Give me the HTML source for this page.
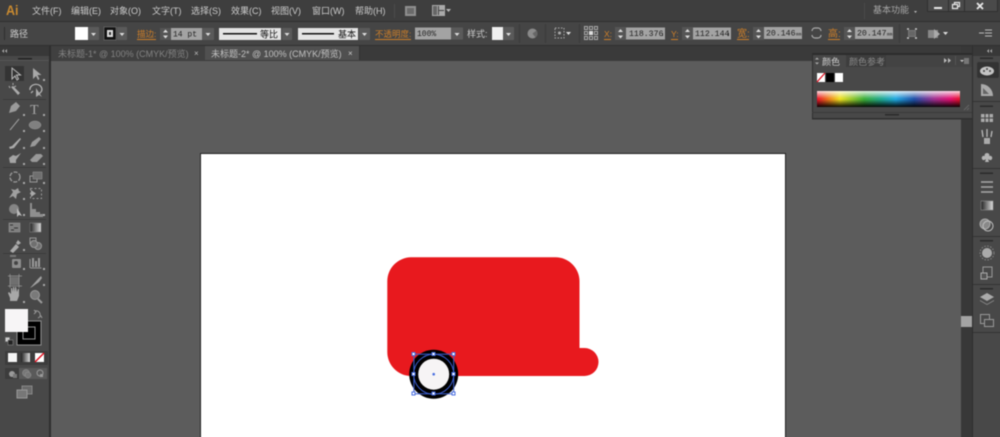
<!DOCTYPE html>
<html><head><meta charset="utf-8"><style>
html,body{margin:0;padding:0;background:#5c5c5c;width:1000px;height:437px;overflow:hidden;position:relative}
svg{display:block;position:absolute;left:-4px;top:-4px;filter:blur(.4px)}
text{font-family:"Liberation Sans","Noto Sans CJK SC",sans-serif;font-size:9px;fill:#cbcbcb}
.m{font-family:"Liberation Mono","Noto Sans CJK SC",monospace;font-size:8px;fill:#222}
.o{fill:#cf7f28;font-size:8.5px}
.s{fill:none;stroke:#b8b8b8;stroke-width:1.2}
.d{fill:#aaa}
</style></head><body>
<svg width="1008" height="445" viewBox="-4 -4 1008 445" xmlns="http://www.w3.org/2000/svg">
<defs>
<linearGradient id="h" x1="0" x2="1" y1="0" y2="0">
<stop offset="0" stop-color="#e8102a"/><stop offset=".08" stop-color="#ee7a1a"/><stop offset=".16" stop-color="#efe020"/><stop offset=".33" stop-color="#3cae3a"/><stop offset=".45" stop-color="#20a890"/><stop offset=".55" stop-color="#20a8e0"/><stop offset=".68" stop-color="#2050a8"/><stop offset=".82" stop-color="#a03090"/><stop offset=".93" stop-color="#e01070"/><stop offset="1" stop-color="#e8102a"/>
</linearGradient>
<linearGradient id="v" x1="0" x2="0" y1="0" y2="1">
<stop offset="0" stop-color="#fff" stop-opacity=".85"/><stop offset=".48" stop-color="#fff" stop-opacity="0"/><stop offset=".52" stop-color="#000" stop-opacity="0"/><stop offset="1" stop-color="#000" stop-opacity=".95"/>
</linearGradient>
<linearGradient id="g" x1="0" x2="1" y1="0" y2="0"><stop offset="0" stop-color="#222"/><stop offset="1" stop-color="#ddd"/></linearGradient>
</defs>

<!-- canvas -->
<rect x="-4" y="-4" width="1008" height="445" fill="#5c5c5c"/>
<rect x="200.500" y="153.500" width="585" height="300" fill="#fff" stroke="#222"/>

<!-- art -->
<path d="M411 257.300H555.500A24 24 0 0 1 579.500 281.300V348H584.500A14 14 0 0 1 584.500 376H411A24 24 0 0 1 387.300 352V281.300A24 24 0 0 1 411 257.300Z" fill="#e8191e"/>
<circle cx="433.700" cy="374.200" r="24.500" fill="#000"/>
<circle cx="433.700" cy="374.200" r="15.500" fill="#f6f4f5"/>
<rect x="413.900" y="354.200" width="39.800" height="39.600" fill="none" stroke="#3d5fd0" stroke-width="1"/>
<circle cx="433.700" cy="374.200" r="20" fill="none" stroke="#3d5fd0" stroke-width="1"/>
<g fill="#fff" stroke="#4a6fe0" stroke-width="1">
<rect x="412" y="352.500" width="3" height="3"/><rect x="432" y="352.500" width="3" height="3"/><rect x="452" y="352.500" width="3" height="3"/>
<rect x="412" y="372.500" width="3" height="3"/><rect x="452" y="372.500" width="3" height="3"/>
<rect x="412" y="392" width="3" height="3"/><rect x="432" y="392" width="3" height="3"/><rect x="452" y="392" width="3" height="3"/>
</g>
<circle cx="433.700" cy="374.200" r="1.300" fill="#4a6fe0"/>

<!-- menu bar -->
<rect x="-4" y="-4" width="1008" height="26" fill="#3e3e3e"/>
<rect x="-4" y="21" width="1008" height="1" fill="#303030"/>
<text x="6" y="15" textLength="12.500" lengthAdjust="spacingAndGlyphs" style="font-size:14px;font-weight:bold;fill:#c98a30">Ai</text>
<text x="32" y="14">文件(F)</text><text x="71" y="14">编辑(E)</text><text x="110" y="14">对象(O)</text><text x="152" y="14">文字(T)</text><text x="191" y="14">选择(S)</text><text x="231" y="14">效果(C)</text><text x="271" y="14">视图(V)</text><text x="312" y="14">窗口(W)</text><text x="355" y="14">帮助(H)</text>
<rect x="394" y="4" width="1" height="14" fill="#4c4c4c"/>
<rect x="405" y="6" width="11" height="10" fill="#8f8f8f"/><rect x="407" y="8" width="7" height="6" fill="#6a6a6a"/>
<rect x="432" y="5" width="13" height="11" fill="#aaa"/><rect x="438" y="6" width="1" height="9" fill="#444"/><rect x="439" y="10" width="5" height="1" fill="#444"/><rect x="433" y="6" width="4" height="9" fill="#666"/>
<path d="M446 9h5l-2.500 3z" fill="#bbb"/>
<rect x="864" y="3" width="1" height="16" fill="#4a4a4a"/>
<text x="873" y="13" style="fill:#a8a8a8">基本功能</text>
<path d="M914 11h3l-1.500 2z" fill="#bbb"/>
<!-- window controls -->
<path d="M927 -4H998V11Q998 12 996 12H929Q927 12 927 11Z" fill="#2f2f2f"/>
<rect x="928" y="-4" width="20" height="15" fill="#4a4a4a"/><rect x="949" y="-4" width="15" height="15" fill="#4a4a4a"/><rect x="965" y="-4" width="32" height="15" fill="#4a4a4a"/>
<rect x="934" y="7" width="8" height="2" fill="#e8e8e8"/>
<path d="M952.500 4.500h5v4h-5zM954.500 4.500v-2h5v4h-2" fill="none" stroke="#e8e8e8" stroke-width="1.200"/>
<path d="M977 3l6 6M983 3l-6 6" stroke="#e8e8e8" stroke-width="1.800" fill="none"/>

<!-- control bar -->
<rect x="-4" y="22" width="1008" height="24" fill="#454545"/>
<rect x="-4" y="45" width="1008" height="1" fill="#303030"/>
<rect x="4" y="27" width="1" height="13" fill="#2f2f2f"/>
<text x="10" y="37">路径</text>
<rect x="75" y="27" width="13" height="13" fill="#fff"/>
<rect x="88" y="27" width="11" height="13" fill="#5a5a5a"/><path d="M91 33h5l-2.500 3z" fill="#ddd"/>
<rect x="104" y="27" width="12" height="13" fill="#111" stroke="#888" stroke-width=".5"/><rect x="107" y="30" width="6" height="7" fill="#ddd"/><rect x="109" y="32" width="2" height="3" fill="#333"/>
<rect x="117" y="27" width="10" height="13" fill="#5a5a5a"/><path d="M119.500 33h5l-2.500 3z" fill="#ddd"/>
<text x="137" y="37" class="o">描边:</text><rect x="137" y="39" width="19" height="1" fill="#cf7f28"/>
<rect x="160" y="28" width="11" height="12" fill="#555"/><path d="M163 32.500h5l-2.500-3zM163 35.500h5l-2.500 3z" fill="#ddd"/>
<rect x="171" y="28" width="31" height="12" fill="#a3a3a3"/><text x="173" y="36.500" class="m">14 pt</text>
<rect x="202" y="28" width="12" height="12" fill="#5a5a5a"/><path d="M205.500 33h5l-2.500 3z" fill="#ddd"/>
<rect x="219" y="28" width="62" height="12" fill="#e4e4e4"/><rect x="223" y="33" width="34" height="1.500" fill="#111"/><text x="260" y="37.500" style="fill:#111">等比</text>
<rect x="282" y="28" width="10" height="12" fill="#5a5a5a"/><path d="M284.500 33h5l-2.500 3z" fill="#ddd"/>
<rect x="298" y="28" width="60" height="12" fill="#e4e4e4"/><rect x="302" y="33" width="32" height="1.500" fill="#111"/><text x="338" y="37.500" style="fill:#111">基本</text>
<rect x="359" y="28" width="11" height="12" fill="#5a5a5a"/><path d="M362 33h5l-2.500 3z" fill="#ddd"/>
<text x="375" y="37" class="o">不透明度:</text><rect x="375" y="39" width="36" height="1" fill="#cf7f28"/>
<rect x="415" y="27.500" width="36" height="12" fill="#a3a3a3"/><text x="417" y="36" class="m">100%</text>
<rect x="451" y="27.500" width="12" height="12" fill="#5a5a5a"/><path d="M454.500 33h5l-2.500 3z" fill="#ddd"/>
<text x="467" y="37">样式:</text>
<rect x="492" y="27" width="11" height="13" fill="#f0f0f0"/><rect x="503" y="27" width="11" height="13" fill="#5a5a5a"/><path d="M506 33h5l-2.500 3z" fill="#ddd"/>
<rect x="519" y="24" width="1" height="19" fill="#3a3a3a"/>
<circle cx="532.500" cy="33.500" r="5" fill="#8a8a8a"/><path d="M532.500 33.500l4-3a5 5 0 0 1-1 7z" fill="#666"/>
<rect x="545" y="24" width="1" height="19" fill="#3a3a3a"/>
<rect x="555" y="28" width="9" height="10" fill="none" stroke="#aaa" stroke-dasharray="1.500 1.500"/><circle cx="559.500" cy="33" r="1.500" fill="#aaa"/><path d="M566 32h5l-2.500 3z" fill="#ddd"/>
<rect x="579" y="24" width="1" height="19" fill="#3a3a3a"/>
<g fill="none" stroke="#aaa"><rect x="584.500" y="26.500" width="3" height="3"/><rect x="589.500" y="26.500" width="3" height="3"/><rect x="594.500" y="26.500" width="3" height="3"/><rect x="584.500" y="31.500" width="3" height="3"/><rect x="594.500" y="31.500" width="3" height="3"/><rect x="584.500" y="36.500" width="3" height="3"/><rect x="589.500" y="36.500" width="3" height="3"/><rect x="594.500" y="36.500" width="3" height="3"/></g><rect x="589" y="31" width="4" height="4" fill="#ddd"/>

<text x="604" y="37" class="o">X:</text><rect x="604" y="39" width="7" height="1" fill="#cf7f28"/>
<rect x="615" y="27" width="11" height="13" fill="#555"/><path d="M618 32h5l-2.500-3zM618 35.500h5l-2.500 3z" fill="#ddd"/>
<rect x="626" y="27.500" width="39" height="12" fill="#a3a3a3"/><text x="629" y="36" class="m" style="font-size:8.200px">118.376</text><rect x="662" y="33" width="1" height="3" fill="#333"/>
<text x="671" y="37" class="o">Y:</text><rect x="671" y="39" width="7" height="1" fill="#cf7f28"/>
<rect x="682" y="27" width="11" height="13" fill="#555"/><path d="M685 32h5l-2.500-3zM685 35.500h5l-2.500 3z" fill="#ddd"/>
<rect x="693" y="27.500" width="38" height="12" fill="#a3a3a3"/><text x="695" y="36" class="m" style="font-size:8.200px">112.144</text><rect x="728" y="33" width="1" height="3" fill="#333"/>
<text x="737" y="37" class="o" style="font-size:10px">宽:</text><rect x="737" y="39" width="12" height="1" fill="#cf7f28"/>
<rect x="753" y="27" width="11" height="13" fill="#555"/><path d="M756 32h5l-2.500-3zM756 35.500h5l-2.500 3z" fill="#ddd"/>
<rect x="764" y="27" width="38" height="12" fill="#a3a3a3"/><text x="766" y="35.500" class="m" style="font-size:8.200px">20.146</text><text x="796" y="35.500" class="m" style="font-size:4.500px">mm</text>
<path d="M812 31a3 3 0 0 1 3-3h3a3 3 0 0 1 3 3M812 35a3 3 0 0 0 3 3h3a3 3 0 0 0 3-3" fill="none" stroke="#aaa" stroke-width="1.200"/>
<text x="828" y="37" class="o" style="font-size:10px">高:</text><rect x="828" y="39" width="12" height="1" fill="#cf7f28"/>
<rect x="844" y="27" width="11" height="13" fill="#555"/><path d="M847 32h5l-2.500-3zM847 35.500h5l-2.500 3z" fill="#ddd"/>
<rect x="855" y="27" width="38" height="12" fill="#a3a3a3"/><text x="857" y="35.500" class="m" style="font-size:8.200px">20.147</text><text x="887" y="35.500" class="m" style="font-size:4.500px">mm</text>
<rect x="899" y="24" width="1" height="19" fill="#3a3a3a"/>
<rect x="908.500" y="30.500" width="7" height="6" fill="#666" stroke="#999" stroke-width=".5"/><path d="M907 29h2M915 29h2M907 38h2M915 38h2" stroke="#ccc" stroke-width="1.500"/>
<rect x="928" y="30" width="10" height="8" fill="#888"/><path d="M934 29l6 5-6 5z" fill="#aaa"/><path d="M943 32h5l-2.500 3z" fill="#ddd"/>
<path d="M979 33h5M985 30h7M985 33h7M985 36h7" stroke="#bbb" fill="none"/>

<!-- tab bar -->
<rect x="-4" y="46" width="1008" height="14" fill="#3a3a3a"/>
<rect x="51" y="46" width="154" height="14" fill="#404040"/>
<text x="58" y="57" style="fill:#828282">未标题-1* @ 100% (CMYK/预览)</text>
<text x="194" y="56" style="font-size:8px;fill:#bbb">×</text>
<rect x="205" y="46" width="154" height="14" fill="#505050"/>
<text x="211" y="57" style="fill:#c0c0c0">未标题-2* @ 100% (CMYK/预览)</text>
<text x="348" y="56" style="font-size:8px;fill:#ccc">×</text>
<rect x="359" y="46" width="1" height="14" fill="#333"/>
<rect x="51" y="60" width="910" height="1" fill="#3c3c3c"/>

<!-- left toolbar -->
<rect x="-4" y="46" width="53" height="395" fill="#484848"/>
<rect x="-4" y="46" width="53" height="10" fill="#383838"/>
<rect x="49" y="46" width="2" height="395" fill="#2e2e2e"/>
<path d="M4 49l-2 2 2 2zM7 49l-2 2 2 2z" fill="#aaa"/>
<rect x="18" y="58" width="14" height="1.500" fill="#222"/>
<rect x="-4" y="60" width="53" height="1" fill="#555"/>
<rect x="5" y="66" width="19" height="15" fill="#343434"/>
<path d="M12 68v11l3-3 2 4 1.500-1-2-4h4z" fill="none" stroke="#bbb"/>
<path d="M33 68v11l3-3 2 4 1.500-1-2-4h4z" fill="#a8a8a8"/><rect class="d" x="43" y="79" width="2" height="2"/>
<path d="M11 87l2-1 7 7-2 2z" fill="#aaa"/><path d="M9 86l1 2M13 83v2M16 86l-2 1" stroke="#aaa" fill="none"/>
<path d="M30 90a6 5 0 1 1 8 4M31 93l2-2" class="s"/><path d="M36 88v9l3-2 3 2z" fill="#aaa"/>
<rect x="3" y="99" width="43" height="1" fill="#3b3b3b"/>
<path d="M9 113l2-7 5-4 4 4-4 5z" fill="#9a9a9a"/><rect class="d" x="23" y="114" width="2" height="2"/>
<text x="30" y="114" style="font-family:'Liberation Serif',serif;font-size:14px;fill:#a8a8a8">T</text><rect class="d" x="43" y="114" width="2" height="2"/>
<path d="M10 130l9-11" stroke="#a0a0a0" fill="none"/><rect class="d" x="23" y="130" width="2" height="2"/>
<ellipse cx="35" cy="125" rx="6" ry="4" fill="#808080" stroke="#999" stroke-width=".5"/><rect class="d" x="43" y="130" width="2" height="2"/>
<path d="M9 147l3-1 8-8 1 1-7 9-4 1z" fill="#aaa"/><rect class="d" x="23" y="147" width="2" height="2"/>
<path d="M30 147l2-5 7-5 2 2-6 7z" fill="#999"/><rect class="d" x="43" y="147" width="2" height="2"/>
<path d="M9 158l4-3 3 1 5-3-5 7v3H10z" fill="#a4a4a4"/><rect class="d" x="23" y="163" width="2" height="2"/>
<path d="M30 160l6-6h5l2 2-6 6h-5z" fill="#999"/><rect class="d" x="43" y="163" width="2" height="2"/>
<rect x="3" y="167" width="43" height="1" fill="#3b3b3b"/>
<circle cx="15" cy="177" r="5" fill="none" stroke="#999" stroke-width="1.300" stroke-dasharray="4 1.500"/><rect class="d" x="23" y="182" width="2" height="2"/>
<rect x="30" y="176" width="7" height="6" fill="none" stroke="#999"/><rect x="33" y="172" width="9" height="7" fill="#6f6f6f" stroke="#999" stroke-width=".5"/><rect class="d" x="43" y="182" width="2" height="2"/>
<path d="M9 198l4-6-2-3 4 1 3-2 1 3 2 1-4 2-1 5-3-3z" fill="#a0a0a0"/><rect class="d" x="23" y="198" width="2" height="2"/>
<rect x="30.500" y="188.500" width="11" height="10" fill="none" stroke="#999" stroke-dasharray="2 2"/><path d="M31 190l5 3.500-5 3.500z" fill="#aaa"/>
<circle cx="14" cy="209" r="5" fill="#858585"/><path d="M17 208v9l2-2 3 1z" fill="#bbb"/><rect class="d" x="23" y="214" width="2" height="2"/>
<path d="M30 203h2v14h-2zM32 209h4v8h-4zM36 212h4v5h-4zM40 214h3v3h-3z" fill="#8e8e8e"/><rect class="d" x="43" y="214" width="2" height="2"/>
<rect x="3" y="219" width="43" height="1" fill="#3b3b3b"/>
<rect x="9" y="223" width="11" height="9" fill="#808080" stroke="#999" stroke-width=".5"/><path d="M10 225h3M14 228h4M11 230h3" stroke="#333"/>
<rect x="30" y="223" width="11" height="9" fill="url(#g)" stroke="#888" stroke-width=".5"/>
<path d="M10 251l6-7 3 3-6 6zM16 243l2-3 3 3-3 2z" fill="#aaa"/><rect class="d" x="23" y="249" width="2" height="2"/>
<rect x="30" y="238" width="6" height="6" fill="none" stroke="#999"/><circle cx="38" cy="246" r="3.500" fill="#6f6f6f" stroke="#999"/><circle cx="34" cy="244" r="3.500" fill="#6f6f6f" stroke="#999"/>
<rect x="3" y="253" width="43" height="1" fill="#3b3b3b"/>
<rect x="12" y="259" width="9" height="9" rx="1" fill="#8e8e8e"/><circle cx="16" cy="263" r="2" fill="#444"/><path d="M10 256h6" stroke="#777" stroke-width="2"/><rect class="d" x="23" y="268" width="2" height="2"/>
<path d="M30 268v-9M30.500 268h11" stroke="#999" fill="none"/><path d="M32 258h2v9h-2zM35 261h2v6h-2zM38 258h2v9h-2z" fill="#999"/><rect class="d" x="43" y="268" width="2" height="2"/>
<rect x="10" y="277" width="9" height="8" fill="#6f6f6f"/><path d="M8 276h14M8 286h14M10 274v14M19 274v14" stroke="#999" fill="none" stroke-width=".7"/>
<path d="M30 288l8-9 3-3 1 2-3 4-7 5z" fill="#a0a0a0"/><rect class="d" x="43" y="284" width="2" height="2"/>
<path d="M10 298l-2-5 1-1 2 2v-6h1l1 4v-5h1l1 5v-5h1l1 5 1-3h1v7l-2 5h-7z" fill="#a8a8a8"/><rect class="d" x="23" y="301" width="2" height="2"/>
<circle cx="35" cy="295" r="4.500" fill="#7a7a7a" stroke="#999"/><path d="M38 299l4 4" stroke="#999" stroke-width="2"/>

<!-- fill stroke -->
<rect x="17" y="321" width="24" height="24" fill="#000" stroke="#909090"/>
<rect x="23" y="327" width="12" height="12" fill="none" stroke="#909090"/>
<rect x="5" y="309" width="23" height="23" fill="#f7f5f6"/>
<path d="M35 311a4 4 0 0 1 5 5M34 310l2 2-2 2M38 318l3-2 1 2" fill="none" stroke="#999"/>
<rect x="5" y="337" width="5" height="5" fill="#ccc" stroke="#555"/><rect x="8" y="340" width="5" height="5" fill="#222" stroke="#888" stroke-width=".6"/>
<rect x="5" y="351" width="43" height="14" fill="#3c3c3c"/>
<rect x="8" y="353" width="9" height="9" fill="#f5f5f5"/>
<rect x="21" y="353" width="9" height="9" fill="url(#g)"/>
<rect x="35" y="353" width="9" height="9" fill="#fff"/><path d="M35 362l9-9" stroke="#e01020" stroke-width="1.500"/>
<rect x="5" y="368" width="42" height="11" fill="#5a5a5a"/><rect x="5" y="368" width="14" height="11" fill="#3c3c3c"/>
<circle cx="12" cy="374" r="3" fill="#999"/><rect x="13" y="374" width="4" height="4" fill="#777"/>
<circle cx="26" cy="373" r="3.500" fill="#777" stroke="#999" stroke-width=".5"/><circle cx="28" cy="375" r="3" fill="#777" stroke="#999" stroke-width=".5"/>
<circle cx="40" cy="373" r="3" fill="none" stroke="#999"/><rect x="40" y="374" width="3" height="3" fill="#999"/>
<rect x="22" y="386" width="10" height="8" fill="#6a6a6a" stroke="#888"/><rect x="17" y="390" width="10" height="8" fill="#777" stroke="#999"/>

<!-- scroll -->
<rect x="961" y="46" width="11" height="395" fill="#383838"/>
<rect x="961" y="316" width="11" height="11" fill="#a3a3a3"/>

<!-- color panel -->
<rect x="972" y="46" width="32" height="10" fill="#383838"/>
<rect x="972" y="46" width="1" height="395" fill="#2e2e2e"/>
<path d="M989 49l-2 2 2 2zM992 49l-2 2 2 2z" fill="#aaa"/>
<rect x="812" y="54" width="160" height="65" fill="#484848"/>
<rect x="812" y="53" width="160" height="2" fill="#2c2c2c"/>
<rect x="812" y="118" width="160" height="1.500" fill="#303030"/>
<rect x="812" y="54" width="1" height="65" fill="#2f2f2f"/>
<rect x="813" y="55" width="159" height="12" fill="#434343"/>
<rect x="813" y="55" width="33" height="12" fill="#484848"/>
<rect x="846" y="55" width="40" height="12" fill="#3d3d3d"/>
<path d="M815 59.500l2-2 2 2zM815 62.500l2 2 2-2z" fill="#aaa"/>
<text x="822" y="65" style="fill:#cfcfcf">颜色</text>
<text x="849" y="65" style="fill:#8a8a8a">颜色参考</text>
<path d="M944 58v5l3-2.500zM948 58v5l3-2.500z" fill="#bbb"/>
<rect x="955" y="56" width="1" height="9" fill="#555"/>
<path d="M960 60h4l-2 2z" fill="#ccc"/><rect x="964" y="58" width="5" height="6" fill="#777"/>
<rect x="817" y="73" width="8" height="9" fill="#fff"/><path d="M817 82l8-9" stroke="#e01020" stroke-width="1.300"/>
<rect x="826" y="73" width="8" height="9" fill="#000"/>
<rect x="835" y="73" width="8" height="9" fill="#fff"/>
<rect x="817" y="91" width="143" height="16" fill="url(#h)"/>
<rect x="817" y="91" width="143" height="16" fill="url(#v)"/>
<path d="M964 110l5-5M967 110l2-2" stroke="#666" fill="none"/>
<rect x="812" y="112" width="160" height="1" fill="#3a3a3a"/>
<rect x="885" y="114" width="14" height="1.500" fill="#2a2a2a"/>

<!-- right dock -->
<rect x="973" y="56" width="31" height="385" fill="#484848"/>
<rect x="980" y="57.500" width="13" height="1.500" fill="#2a2a2a"/>
<rect x="977" y="62" width="22" height="16" rx="2" fill="#333"/>
<ellipse cx="987" cy="71" rx="7" ry="4.500" fill="#c4c4c4"/><circle cx="984" cy="71" r="1" fill="#444"/><circle cx="987" cy="69" r="1" fill="#444"/><circle cx="990" cy="71" r="1" fill="#444"/>
<path d="M981 84v12h12a12 12 0 0 0-12-12z" fill="#aaa"/><path d="M983 88v6h6z" fill="#666"/>
<rect x="973" y="101" width="31" height="1" fill="#333"/>
<rect x="980" y="105.500" width="13" height="1.500" fill="#2a2a2a"/>
<rect x="981" y="114" width="12" height="8" fill="#aaa"/><path d="M985 114v8M989 114v8M981 118h12" stroke="#444"/>
<path d="M984 138h6v6h-6z" fill="#aaa"/><path d="M983 137l-1-7M987 137v-8M991 137l1-6" stroke="#bbb" stroke-width="1.300"/>
<path d="M987 153c-2 0-3 2-2 3-2-1-4 1-3 3s3 1 4 0l-1 3h4l-1-3c1 1 3 2 4 0s-1-4-3-3c1-1 0-3-2-3z" fill="#b4b4b4"/>
<rect x="973" y="168" width="31" height="1" fill="#333"/>
<rect x="980" y="172.500" width="13" height="1.500" fill="#2a2a2a"/>
<path d="M981 182h12M981 187h12M981 192h12" stroke="#a8a8a8" stroke-width="1.500"/>
<rect x="981" y="201" width="12" height="9" fill="url(#g)" stroke="#999" stroke-width=".5"/>
<circle cx="985" cy="224" r="5" fill="#888" stroke="#aaa"/><circle cx="988" cy="226" r="5" fill="none" stroke="#bbb"/>
<rect x="973" y="236" width="31" height="1" fill="#333"/>
<rect x="980" y="240" width="13" height="1.500" fill="#2a2a2a"/>
<circle cx="987" cy="253" r="5" fill="#aaa"/><circle cx="987" cy="253" r="7" fill="none" stroke="#888" stroke-dasharray="1.500 1.500"/>
<rect x="983" y="267" width="9" height="10" fill="none" stroke="#999"/><rect x="981" y="273" width="6" height="6" fill="#555" stroke="#aaa"/>
<rect x="973" y="284" width="31" height="1" fill="#333"/>
<rect x="980" y="288" width="13" height="1.500" fill="#2a2a2a"/>
<path d="M987 293l7 4-7 4-7-4z" fill="#aaa"/><path d="M980 300l7 4 7-4v1l-7 4-7-4z" fill="#888"/>
<rect x="980.500" y="314.500" width="9" height="9" fill="none" stroke="#999"/><rect x="984.500" y="319.500" width="9" height="7" fill="#484848" stroke="#999"/>
<rect x="973" y="332" width="31" height="1" fill="#333"/>
</svg>
</body></html>
